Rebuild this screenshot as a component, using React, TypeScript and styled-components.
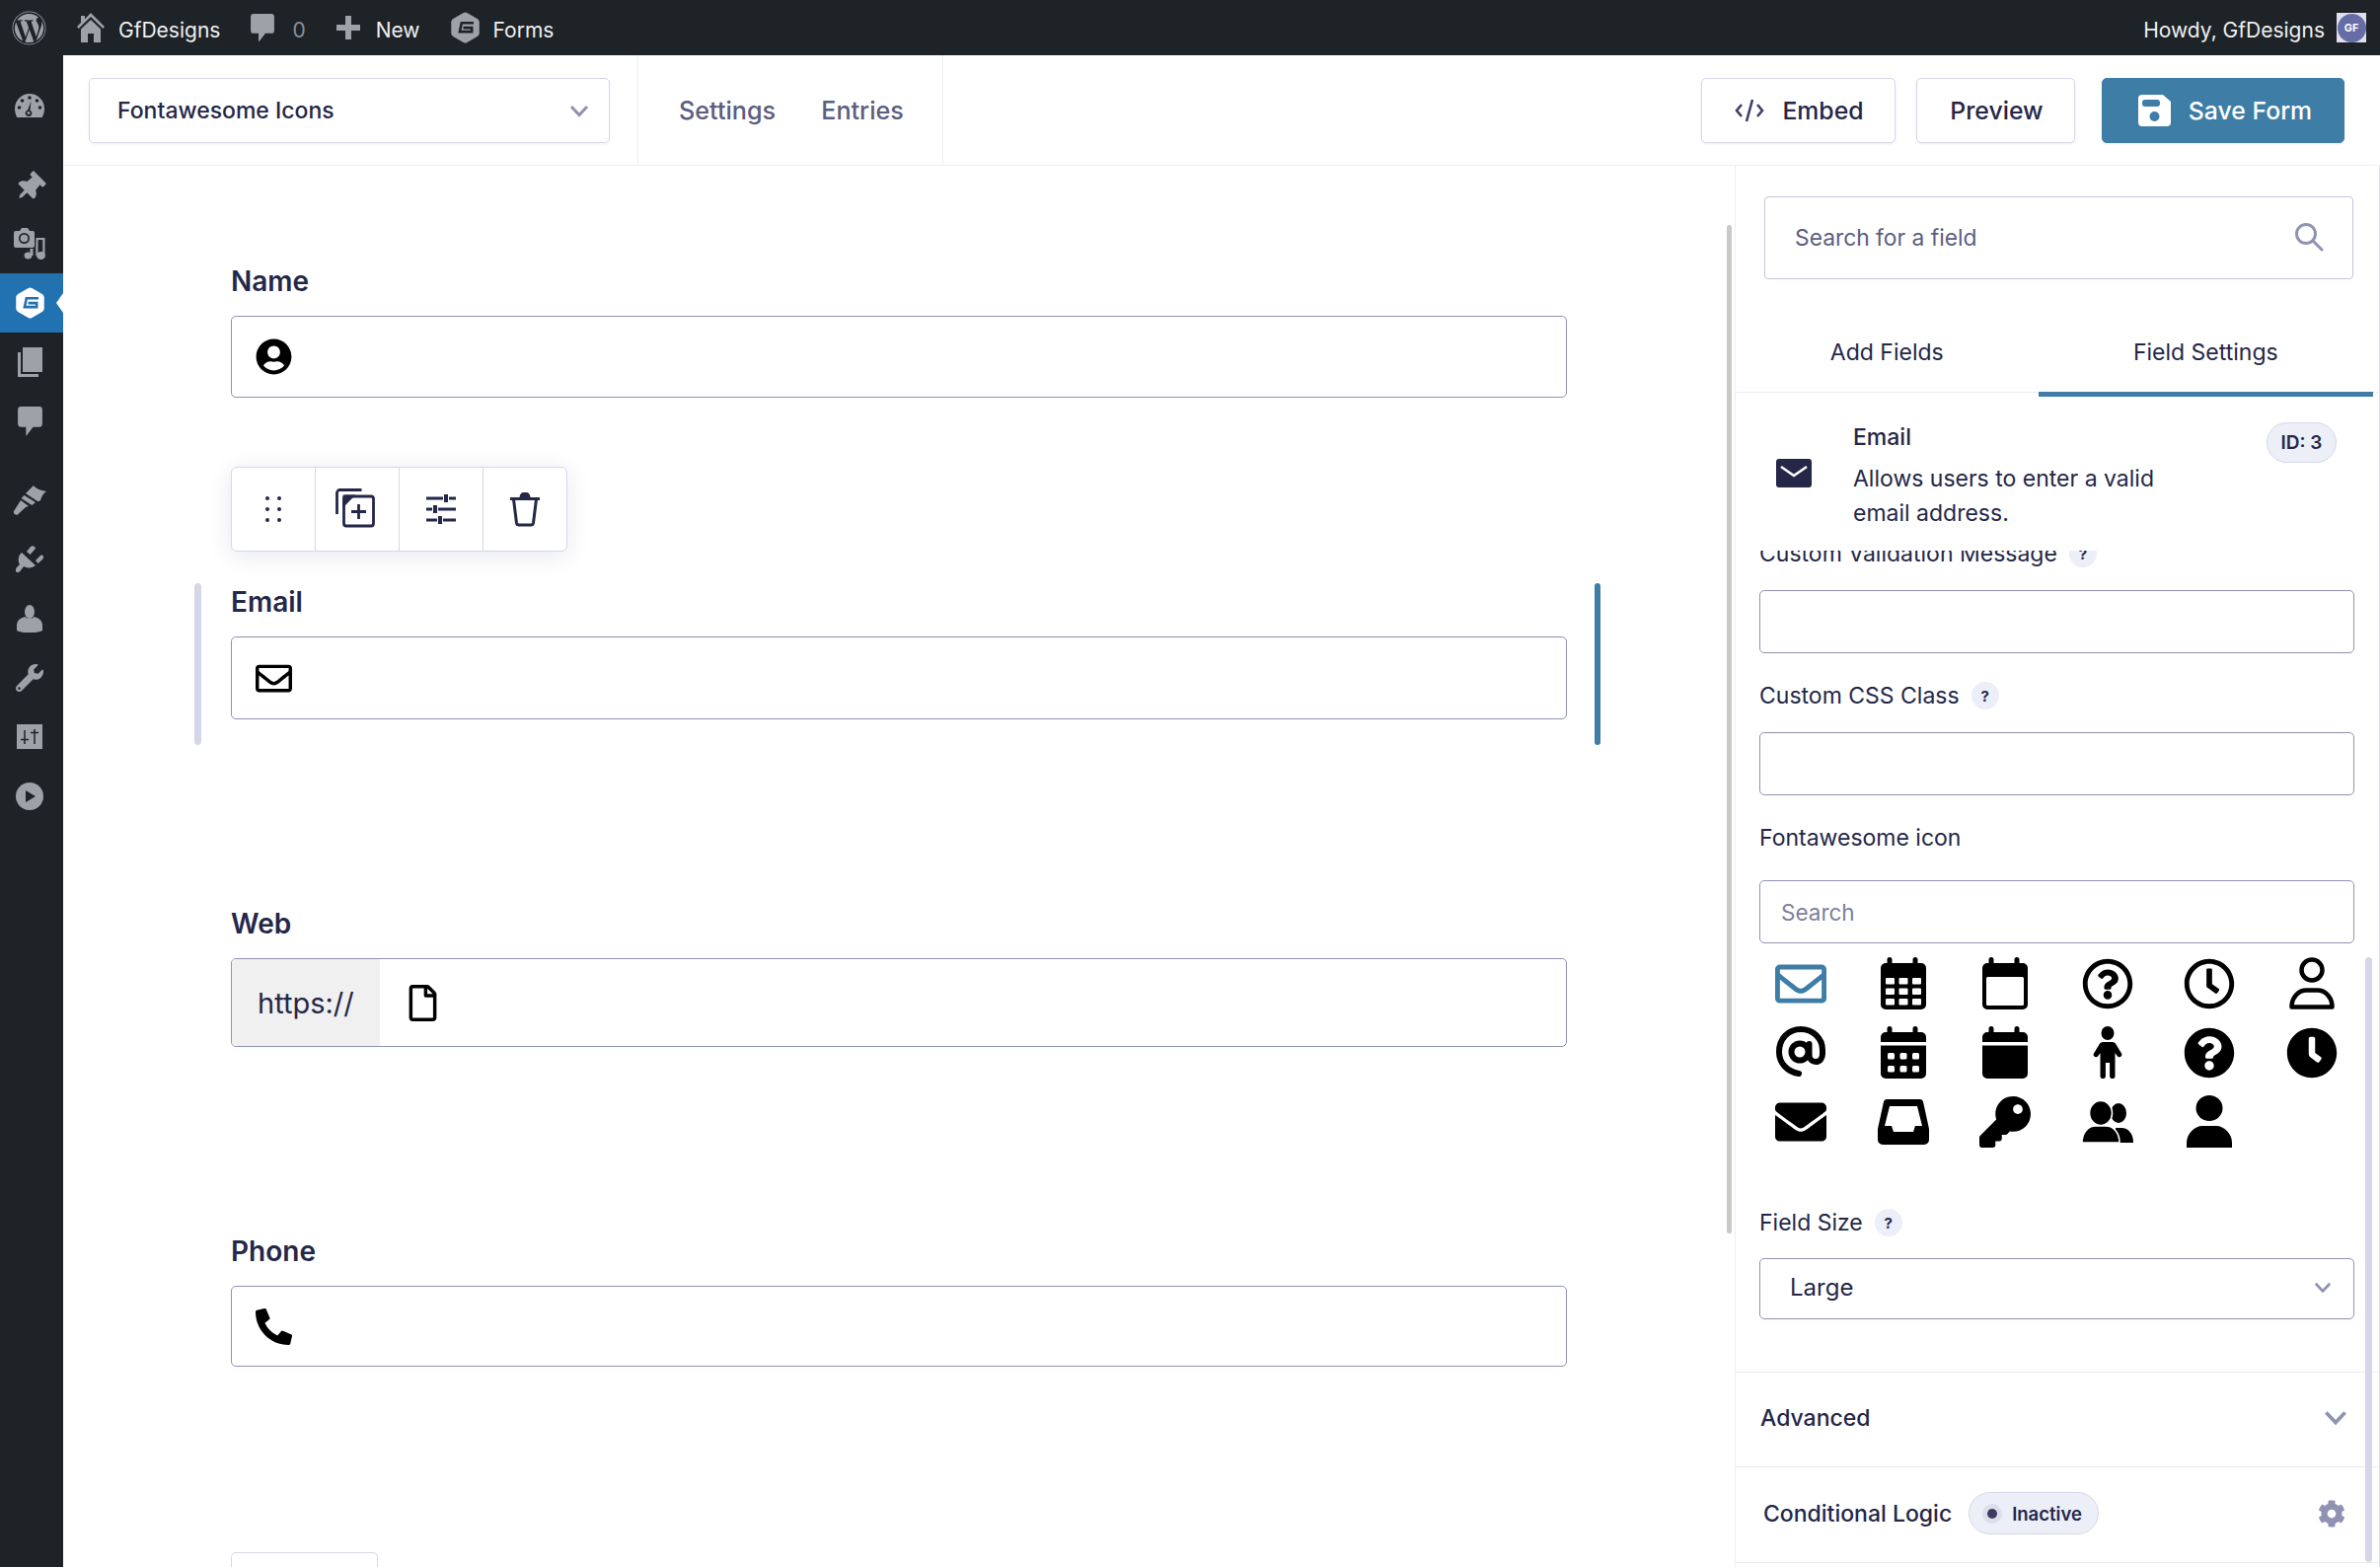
import React from "react";
import styled, { createGlobalStyle } from "styled-components";
import {
  FaCog,
  FaEnvelope,
  FaKey,
  FaPhoneAlt,
  FaQuestionCircle,
  FaClock,
  FaRegClock,
  FaRegEnvelope,
  FaRegFile,
  FaRegQuestionCircle,
  FaThumbtack,
  FaUserCircle,
  FaWordpress,
  FaWrench,
} from "react-icons/fa";

const ink = "#242748";
const muted = "#5b5e80";
const line = "#d5d7e9";
const inputLine = "#9092b2";
const blue = "#3e7da6";
const barIcon = "#9ca2a7";
const dark = "#1d2327";

const GlobalStyle = createGlobalStyle`
  html, body {
    margin: 0;
    padding: 0;
    background: #fff;
    overflow: hidden;
  }
  * {
    box-sizing: border-box;
  }
  body {
    font-family: Inter, "Liberation Sans", sans-serif;
    color: ${ink};
  }
`;

const Page = styled.div`
  width: 2412px;
  height: 1588px;
  display: flex;
  flex-direction: column;
  overflow: hidden;
`;

const TopBar = styled.header`
  height: 56px;
  flex: none;
  background: ${dark};
  color: #f0f0f1;
  display: flex;
  align-items: center;
  justify-content: space-between;
  padding: 0 14px 0 12px;
  font-size: 21px;
  line-height: 28px;
`;

const BarGroup = styled.div`
  display: flex;
  align-items: center;
  gap: 31px;
`;

const BarLink = styled.span<{ $gap?: number }>`
  display: flex;
  align-items: center;
  gap: ${({ $gap }) => $gap ?? 14}px;
  color: #f0f0f1;

  svg {
    color: ${barIcon};
    flex: none;
  }
`;

const BarText = styled.span`
  padding-top: 5px;
`;

const BarCount = styled(BarText)`
  color: #8c8f94;
`;

const Howdy = styled.div`
  display: flex;
  align-items: center;
  gap: 12px;
`;

const Avatar = styled.span`
  width: 30px;
  height: 30px;
  background: #dfe0ec;
  display: flex;
  align-items: center;
  justify-content: center;
`;

const AvatarMark = styled.span`
  width: 29px;
  height: 29px;
  border-radius: 50%;
  background: #666ca6;
  color: #fff;
  font-size: 11px;
  font-weight: 700;
  display: flex;
  align-items: center;
  justify-content: center;
`;

const Body = styled.div`
  flex: 1;
  display: flex;
  min-height: 0;
`;

const Sidebar = styled.nav`
  width: 64px;
  flex: none;
  background: ${dark};
  padding-top: 21px;
`;

const SideItem = styled.div<{ $active?: boolean; $gapTop?: boolean }>`
  position: relative;
  height: 60px;
  margin-top: ${({ $gapTop }) => ($gapTop ? 20 : 0)}px;
  padding-right: 4px;
  display: flex;
  align-items: center;
  justify-content: center;
  color: ${({ $active }) => ($active ? "#fff" : barIcon)};
  background: ${({ $active }) => ($active ? "#2271b1" : "transparent")};

  ${({ $active }) =>
    $active &&
    `&::after {
      content: "";
      position: absolute;
      right: 0;
      top: 50%;
      margin-top: -10px;
      border: 10px solid transparent;
      border-right-color: #fff;
      border-left-width: 0;
      border-right-width: 7px;
    }`}
`;

const PinIcon = styled(FaThumbtack)`
  transform: translateY(3px) rotate(45deg);
`;

const Main = styled.div`
  flex: 1;
  min-width: 0;
  display: flex;
  flex-direction: column;
`;

const Header = styled.div`
  height: 112px;
  flex: none;
  display: flex;
  align-items: stretch;
  border-bottom: 1px solid #eceef5;
`;

const FormPicker = styled.div`
  width: 583px;
  padding: 23px 28px 0 26px;
  border-right: 1px solid #eceef5;
`;

const FormSelect = styled.div`
  height: 66px;
  border: 1px solid ${line};
  border-radius: 5px;
  box-shadow: 0 1px 3px rgba(18, 25, 97, 0.06);
  display: flex;
  align-items: center;
  justify-content: space-between;
  padding: 0 20px 0 28px;
  font-size: 23px;
  font-weight: 500;
`;

const HeaderNav = styled.div`
  width: 309px;
  padding-left: 41px;
  border-right: 1px solid #eceef5;
  display: flex;
  align-items: center;
  gap: 46px;
  font-size: 25.2px;
  font-weight: 500;
  color: ${muted};
`;

const HeaderActions = styled.div`
  flex: 1;
  padding: 23px 36px 0 0;
  display: flex;
  justify-content: flex-end;
  gap: 21px;
`;

const HeaderButton = styled.div<{ $primary?: boolean; $width: number }>`
  width: ${({ $width }) => $width}px;
  height: 66px;
  display: flex;
  align-items: center;
  justify-content: center;
  gap: 18px;
  border-radius: 5px;
  font-size: 24.8px;
  font-weight: 500;
  padding-left: ${({ $primary }) => ($primary ? 4 : 2)}px;
  border: 1px solid ${({ $primary }) => ($primary ? blue : line)};
  background: ${({ $primary }) => ($primary ? blue : "#fff")};
  color: ${({ $primary }) => ($primary ? "#fff" : ink)};
  box-shadow: 0 1px 3px rgba(18, 25, 97, 0.08);
  margin-left: ${({ $primary }) => ($primary ? 6 : 0)}px;
`;

const Content = styled.div`
  flex: 1;
  min-height: 0;
  display: flex;
`;

const Canvas = styled.main`
  position: relative;
  flex: 1;
  min-width: 0;
  padding: 99px 0 0 170px;
  overflow: hidden;
  display: flex;
  flex-direction: column;
  gap: 189px;
`;

const CanvasScroll = styled.div`
  position: absolute;
  top: 60px;
  right: 3px;
  width: 5px;
  height: 1022px;
  background: #c9c9c5;
  border-radius: 3px;
`;

const Field = styled.section`
  position: relative;
  width: 1354px;
  flex: none;
`;

const FieldLabel = styled.div`
  height: 36px;
  margin-bottom: 17px;
  font-size: 28px;
  font-weight: 600;
  line-height: 36px;
`;

const FieldBox = styled.div<{ $height: number }>`
  height: ${({ $height }) => $height}px;
  border: 1px solid ${inputLine};
  border-radius: 5px;
  display: flex;
  align-items: center;
  padding-left: 24px;
  color: #000;
`;

const WebBox = styled(FieldBox)`
  padding-left: 0;
  overflow: hidden;
`;

const NextFieldStub = styled(FieldBox)`
  width: 149px;
  margin-top: -1px;
  border-color: ${line};
`;

const WebPrefix = styled.div`
  width: 151px;
  align-self: stretch;
  margin: -1px 0 -1px -1px;
  padding-left: 26px;
  background: #f0f0f0;
  border: 1px solid #c9c9cf;
  border-right: 0;
  display: flex;
  align-items: center;
  font-size: 29px;
  color: ${ink};
`;

const WebIcon = styled.span`
  display: flex;
  margin-left: 25px;
`;

const SelectBar = styled.div<{ $side: "left" | "right" }>`
  position: absolute;
  top: -1px;
  bottom: -26px;
  width: ${({ $side }) => ($side === "left" ? 7 : 6)}px;
  border-radius: 4px;
  background: ${({ $side }) => ($side === "left" ? line : blue)};
  ${({ $side }) => ($side === "left" ? "left: -37px;" : "right: -34px;")}
`;

const FieldTools = styled.div`
  position: absolute;
  left: 0;
  top: -119px;
  width: 341px;
  height: 86px;
  display: flex;
  background: #fff;
  border: 1px solid ${line};
  border-radius: 6px;
  box-shadow: 0 4px 24px rgba(18, 25, 97, 0.1);
`;

const ToolCell = styled.div`
  flex: 1;
  display: flex;
  align-items: center;
  justify-content: center;
  & + & {
    border-left: 1px solid ${line};
  }
`;

const DuplicateGlyph = styled.svg`
  margin: -2px 4px 0 0;
`;

const Panel = styled.aside`
  position: relative;
  width: 654px;
  flex: none;
  border-left: 1px solid #eceef5;
  border-right: 1px solid #dcdde6;
  display: flex;
  flex-direction: column;
  overflow: hidden;
`;

const PanelScroll = styled.div`
  position: absolute;
  z-index: 2;
  top: 802px;
  bottom: 5px;
  right: 7px;
  width: 7px;
  border-radius: 4px;
  background: ${line};
`;

const SearchBox = styled.div`
  flex: none;
  height: 84px;
  margin: 31px 26px 0 29px;
  border: 1px solid #c4c5dc;
  border-radius: 4px;
  display: flex;
  align-items: center;
  justify-content: space-between;
  padding: 0 29px 2px 30px;
  font-size: 22.8px;
  color: ${muted};
`;

const Tabs = styled.div`
  flex: none;
  margin-top: 34px;
  height: 81px;
  display: flex;
  padding-right: 6px;
  border-bottom: 1px solid #e9e9ee;
`;

const Tab = styled.div<{ $active?: boolean; $width: number }>`
  position: relative;
  width: ${({ $width }) => $width}px;
  display: flex;
  align-items: center;
  justify-content: center;
  font-size: 23px;
  font-weight: 400;

  ${({ $active }) =>
    $active &&
    `&::after {
      content: "";
      position: absolute;
      left: 0;
      right: 0;
      bottom: -5px;
      height: 5px;
      background: ${blue};
    }`}
`;

const Summary = styled.div`
  flex: none;
  height: 155px;
  margin-top: 5px;
  padding: 23px 43px 0 41px;
  display: flex;
  align-items: flex-start;
  position: relative;
  z-index: 1;
  background: #fff;
`;

const SummaryIcon = styled.span`
  display: flex;
  margin: 39px 42px 0 0;
`;

const SummaryText = styled.div`
  flex: 1;
  font-size: 23px;
  line-height: 35px;
`;

const SummaryTitle = styled.div`
  margin-bottom: 7px;
  font-weight: 500;
`;

const SummaryDescription = styled.div`
  width: 340px;
`;

const IdPill = styled.div`
  width: 71px;
  height: 41px;
  margin-top: 2px;
  border-radius: 21px;
  border: 1px solid ${line};
  background: #eceef8;
  display: flex;
  align-items: center;
  justify-content: center;
  font-size: 19px;
  font-weight: 600;
`;

const Settings = styled.div`
  flex: 1;
  min-height: 0;
  overflow: hidden;
`;

const SettingsForm = styled.div`
  margin-top: -13px;
  padding: 0 25px 0 24px;
`;

const SettingLabel = styled.div<{ $after?: number; $before?: number }>`
  height: 32px;
  margin-top: ${({ $before }) => $before ?? 0}px;
  margin-bottom: ${({ $after }) => $after ?? 18}px;
  display: flex;
  align-items: center;
  gap: 12px;
  font-size: 23px;
`;

const HelpBadge = styled.span`
  width: 28px;
  height: 28px;
  border-radius: 50%;
  background: #eceef8;
  display: flex;
  align-items: center;
  justify-content: center;
  font-size: 15px;
  font-weight: 700;
`;

const SettingInput = styled.div<{ $height?: number; $placeholder?: boolean }>`
  width: 603px;
  height: ${({ $height }) => $height ?? 64}px;
  border: 1px solid ${inputLine};
  border-radius: 5px;
  display: flex;
  align-items: center;
  padding: 0 21px;
  font-size: 22.5px;
  color: ${({ $placeholder }) => ($placeholder ? "#7d7f9c" : ink)};
`;

const SelectValue = styled(SettingInput)`
  justify-content: space-between;
  padding: 0 22px 3px 30px;
  font-size: 24px;
`;

const IconGrid = styled.div`
  margin-top: 14px;
  padding-left: 16px;
  display: grid;
  grid-template-columns: repeat(6, 52px);
  grid-auto-rows: 53px;
  column-gap: 51.6px;
  row-gap: 17px;
`;

const IconCell = styled.span<{ $active?: boolean }>`
  display: flex;
  align-items: center;
  justify-content: center;
  color: ${({ $active }) => ($active ? blue : "#000")};
`;

const Drawer = styled.div<{ $height: number }>`
  height: ${({ $height }) => $height}px;
  border-top: 1px solid #e9e9ee;
  display: flex;
  align-items: center;
  justify-content: space-between;
  font-size: 23px;
  font-weight: 500;
`;

const Drawers = styled.div`
  margin-top: 53px;
`;

const AdvancedRow = styled(Drawer)`
  padding: 0 32px 3px 25px;
`;

const LogicRow = styled(Drawer)`
  padding: 0 34px 3px 28px;
  border-bottom: 1px solid #e9e9ee;
`;

const LogicLeft = styled.div`
  display: flex;
  align-items: center;
  gap: 17px;
`;

const StatePill = styled.div`
  width: 132px;
  height: 43px;
  border-radius: 22px;
  border: 1px solid ${line};
  background: #eceef8;
  display: flex;
  align-items: center;
  padding-left: 13px;
  gap: 10px;
  font-size: 18.5px;
  font-weight: 600;
`;

const StateDot = styled.span`
  width: 20px;
  height: 20px;
  border-radius: 50%;
  background: #dcdeea;
  position: relative;

  &::after {
    content: "";
    position: absolute;
    inset: 5px;
    border-radius: 50%;
    background: #3b3e60;
  }
`;

const GfLogo = ({ size, body, mark }: { size: number; body: string; mark: string }) => (
  <svg width={size} height={size * 1.1} viewBox="0 0 29 32">
    <path
      fill={body}
      d="M12.6 1 Q14.5 0 16.4 1 L26.8 7 Q28.8 8.2 28.8 10.4 V21.6 Q28.8 23.8 26.8 25 L16.4 31 Q14.5 32 12.6 31 L2.2 25 Q.2 23.8 .2 21.6 V10.4 Q.2 8.2 2.2 7 Z"
    />
    <path fill="none" stroke={mark} strokeWidth="2.6" d="M23 11.3H10.8L8.9 20.2H21.2V16.2H12.5" />
  </svg>
);

const HomeIcon = () => (
  <svg width="28" height="30" viewBox="0 0 28 30" fill="currentColor">
    <path d="M14 0L28 14l-1.6 2L14 4 1.600 16 0 14 4 10V3h4v3.300z" />
    <path d="M14 7l10 9.500V30h-7v-9h-6v9H4V16.500z" />
  </svg>
);

const BubbleIcon = ({ size = 24 }: { size?: number }) => (
  <svg width={size} height={size * 1.2} viewBox="0 0 24 29" fill="currentColor">
    <path d="M3 0h18a3 3 0 0 1 3 3v14a3 3 0 0 1-3 3h-6l-7 9v-9H3a3 3 0 0 1-3-3V3a3 3 0 0 1 3-3z" />
  </svg>
);

const PlusIcon = () => (
  <svg width="24" height="24" viewBox="0 0 24 24" fill="currentColor">
    <path d="M9 0h6v9h9v6h-9v9H9v-9H0V9h9z" />
  </svg>
);

const DashboardIcon = () => (
  <svg width="30" height="24" viewBox="0 0 30 24">
    <path fill="currentColor" d="M15 0A15 15 0 0 0 0 15c0 3.300.8 6.200 2.300 9h25.400A17 17 0 0 0 30 15 15 15 0 0 0 15 0z" />
    <g fill={dark}>
      <circle cx="15" cy="4" r="1.800" />
      <circle cx="7.500" cy="7" r="1.800" />
      <circle cx="22.500" cy="7" r="1.800" />
      <circle cx="4.500" cy="14" r="1.800" />
      <circle cx="25.500" cy="14" r="1.800" />
      <path d="M16.500 7.500l-1 9.300a3.300 3.300 0 1 1-2.400-.2z" />
    </g>
    <circle cx="14" cy="19.500" r="1.400" fill="currentColor" />
  </svg>
);

const MediaIcon = () => (
  <svg width="32" height="32" viewBox="0 0 32 32" fill="currentColor">
    <path d="M2 3h4l2-3h6l2 3h3a2 2 0 0 1 2 2v13a2 2 0 0 1-2 2H2a2 2 0 0 1-2-2V5a2 2 0 0 1 2-2z" />
    <circle cx="10.500" cy="10.500" r="5.500" fill={dark} />
    <circle cx="10.500" cy="10.500" r="3.800" />
    <path d="M22 9.500h10v19h-3.200V12.500H25v16h-3.200V20z" stroke={dark} strokeWidth="1" />
    <ellipse cx="14.500" cy="28" rx="4.500" ry="4" stroke={dark} strokeWidth="1" />
    <ellipse cx="27.500" cy="28" rx="4.500" ry="4" />
    <rect x="16.500" y="21" width="3" height="7" />
  </svg>
);

const PagesIcon = () => (
  <svg width="25" height="30" viewBox="0 0 25 30" fill="currentColor">
    <path d="M5 0h20v25H5z" />
    <path d="M0 5h3v22h18v3H0z" />
  </svg>
);

const BrushIcon = () => (
  <svg width="34" height="30" viewBox="0 0 34 30" fill="currentColor">
    <path d="M13 8L21 0c2 3 7 5 13 6-3 2-5 5-6 9-1 1-2 1-3 1z" />
    <path d="M11.500 10l11.500 7-3.500 3-11-7zM8 15l8 6-3 1-8 7.500c-2 1-5-1-4-3.500z" />
  </svg>
);

const PlugIcon = () => (
  <svg width="28" height="28" viewBox="0 0 28 28" fill="currentColor">
    <path d="M6 7l14 13c-3 3-9 3-12 1l-3 4c-1 2-4 3-5 1-1-1 0-3 1-4l3-3C2 16 2 10 6 7z" />
    <path d="M11 6l4-5c1-1 3-1 4 0s1 2 0 3l-4.500 5zM20 15l5-5c1-1 3 0 3 1s0 2-1 3l-4.500 4z" />
  </svg>
);

const UserIcon = () => (
  <svg width="26" height="28" viewBox="0 0 26 28" fill="currentColor">
    <ellipse cx="13" cy="7" rx="5" ry="7" />
    <path d="M8.500 12c1 2.500 8 2.500 9 0 4 1 8.500 3 8.500 9v5c-6 3-20 3-26 0v-5c0-6 4.500-8 8.500-9z" />
  </svg>
);

const SettingsIcon = () => (
  <svg width="26" height="26" viewBox="0 0 26 26">
    <path fill="currentColor" d="M0 0h26v25H0z" />
    <g stroke={dark} strokeWidth="1.500" fill="none">
      <path d="M8 6v14M4 15.500h8M18 5v15M14 8.500h8" />
    </g>
  </svg>
);

const PlayIcon = () => (
  <svg width="28" height="28" viewBox="0 0 28 28">
    <circle cx="14" cy="14" r="14" fill="currentColor" />
    <path d="M10 8l10 6-10 6z" fill={dark} />
  </svg>
);

const Chevron = ({ size = 20, color = inputLine }: { size?: number; color?: string }) => (
  <svg width={size} height={size * 0.65} viewBox="0 0 20 13" fill="none" stroke={color} strokeWidth="3">
    <path d="M2 2l8 8.500L18 2" />
  </svg>
);

const CodeIcon = () => (
  <svg width="30" height="24" viewBox="0 0 30 24" fill="none" stroke="#3e4168" strokeWidth="2.600">
    <path d="M7 6L2 12l5 6M23 6l5 6-5 6M18 1l-6 22" />
  </svg>
);

const SaveIcon = () => (
  <svg width="33" height="32" viewBox="0 0 33 32">
    <path fill="#fff" d="M4 0h21l8 7v21a4 4 0 0 1-4 4H4a4 4 0 0 1-4-4V4a4 4 0 0 1 4-4z" />
    <rect x="4" y="5" width="18" height="7" rx="3" fill={blue} />
    <circle cx="16.500" cy="22" r="5" fill={blue} />
  </svg>
);

const SearchIcon = () => (
  <svg width="30" height="30" viewBox="0 0 30 30" fill="none" stroke={inputLine} strokeWidth="3">
    <circle cx="12" cy="12" r="9.500" />
    <path d="M19 19l9 9" strokeLinecap="round" />
  </svg>
);

const DotsIcon = () => (
  <svg width="18" height="28" viewBox="0 0 18 28" fill={ink}>
    <circle cx="3" cy="3" r="2" />
    <circle cx="15" cy="3" r="2" />
    <circle cx="3" cy="14" r="2" />
    <circle cx="15" cy="14" r="2" />
    <circle cx="3" cy="25" r="2" />
    <circle cx="15" cy="25" r="2" />
  </svg>
);

const DuplicateIcon = () => (
  <DuplicateGlyph width="40" height="40" viewBox="0 0 40 40" fill="none" stroke={ink} strokeWidth="2.800">
    <path d="M1.500 26V4.500a3 3 0 0 1 3-3h22" />
    <rect x="8.500" y="8" width="30" height="30" rx="2.500" />
    <path d="M9 8h8l-8 8z" fill={ink} />
    <path d="M23.500 16v15M16 23.500h15" />
  </DuplicateGlyph>
);

const SlidersIcon = () => (
  <svg width="32" height="32" viewBox="0 0 32 32" fill="none" stroke={ink} strokeWidth="2.800">
    <path d="M1 5h17M24 5h7M1 16h6M13 16h18M1 27h11M18 27h13" />
    <path d="M21 1v8M10 12v8M15 23v8" strokeWidth="4" />
  </svg>
);

const TrashIcon = () => (
  <svg width="32" height="35" viewBox="0 0 32 35" fill="none" stroke={ink} strokeWidth="3">
    <path d="M1 6.500h30M4.500 7l3 24a2.500 2.500 0 0 0 2.500 2h12a2.500 2.500 0 0 0 2.500-2l3-24" />
    <path d="M12 5a4 4 0 0 1 8 0z" fill={ink} />
  </svg>
);

const MailTile = () => (
  <svg width="36" height="29" viewBox="0 0 36 29">
    <rect width="36" height="29" rx="3" fill={ink} />
    <path d="M5 8l13 9 13-9" fill="none" stroke="#fff" strokeWidth="2.600" />
  </svg>
);

const calendarShell =
  "M9 0a2.500 2.500 0 0 1 2.500 2.500V6h21V2.500a2.500 2.500 0 0 1 5 0V6H41a5 5 0 0 1 5 5v37a5 5 0 0 1-5 5H5a5 5 0 0 1-5-5V11a5 5 0 0 1 5-5h1.500V2.500A2.500 2.500 0 0 1 9 0z";

const CalendarGrid = () => (
  <svg width="46" height="53" viewBox="0 0 46 53">
    <path fill="#000" d={calendarShell} />
    <g fill="#fff">
      {[21, 31.500, 42].map((y) =>
        [5, 18.500, 32].map((x) => <rect key={`${x}-${y}`} x={x} y={y} width="9" height="6.500" rx="1" />)
      )}
    </g>
  </svg>
);

const CalendarOutline = () => (
  <svg width="46" height="53" viewBox="0 0 46 53">
    <path fill="#000" d={calendarShell} />
    <rect x="4" y="20" width="38" height="29" rx="1.500" fill="#fff" />
  </svg>
);

const CalendarDots = () => (
  <svg width="46" height="53" viewBox="0 0 46 53">
    <path fill="#000" d={calendarShell} />
    <rect y="16" width="46" height="3.500" fill="#fff" />
    <g fill="#fff">
      {[27, 40].map((y) =>
        [7, 19.500, 32].map((x) => <rect key={`${x}-${y}`} x={x} y={y} width="7" height="6.500" rx="1.500" />)
      )}
    </g>
  </svg>
);

const CalendarSolid = () => (
  <svg width="46" height="53" viewBox="0 0 46 53">
    <path fill="#000" d={calendarShell} />
    <rect y="16" width="46" height="3.500" fill="#fff" />
  </svg>
);

const AtIcon = () => (
  <svg width="50" height="53" viewBox="0 0 50 53" fill="none" stroke="#000" strokeWidth="6" strokeLinecap="round">
    <path d="M23 48C11 46 3 37 3 26 3 13 12 3 25 3c12 0 22 9 22 21v4c0 5-3 8-7 8-3.500 0-6.500-3-6.500-7V18" />
    <ellipse cx="24" cy="26" rx="8.500" ry="8.500" />
  </svg>
);

const ChildIcon = () => (
  <svg width="34" height="53" viewBox="0 0 34 53">
    <ellipse cx="17" cy="7" rx="6.500" ry="7" fill="#000" />
    <path d="M12 16h10a4 4 0 0 1 3 1.500l6 10a2.500 2.500 0 0 1-4.200 2.700L24.500 27v23.500a2.700 2.700 0 0 1-5.400 0V37h-4.200v13.500a2.700 2.700 0 0 1-5.400 0V27l-2.300 3.200A2.500 2.500 0 0 1 3 27.500l6-10A4 4 0 0 1 12 16z" fill="#000" />
  </svg>
);

const InboxIcon = () => (
  <svg width="52" height="46" viewBox="0 0 52 46">
    <path
      fill="#000"
      fillRule="evenodd"
      d="M9 0h34a3 3 0 0 1 3 2.500L52 30v11a5 5 0 0 1-5 5H5a5 5 0 0 1-5-5V30L6 2.500A3 3 0 0 1 9 0zM12 7L7 27h7l2 6h20l2-6h7L40 7z"
    />
  </svg>
);

const FriendsIcon = () => (
  <svg width="52" height="42" viewBox="0 0 52 42">
    <ellipse cx="37" cy="12" rx="8" ry="10" fill="#000" />
    <path d="M34 27h6c7 0 12 6 12 15H34z" fill="#000" />
    <ellipse cx="19" cy="12" rx="11.500" ry="12.500" fill="#000" stroke="#fff" strokeWidth="1.600" />
    <path d="M0 42c0-10 6-17 14-17h10c8 0 14 7 14 17z" fill="#000" stroke="#fff" strokeWidth="1.600" />
  </svg>
);

const UserOutline = () => (
  <svg width="46" height="53" viewBox="0 0 46 53" fill="none" stroke="#000" strokeWidth="4.500">
    <ellipse cx="23" cy="13" rx="10.500" ry="10.500" />
    <path d="M2.500 50.500c0-10 7-17 15-17h11c8 0 15 7 15 17z" strokeLinejoin="round" />
  </svg>
);

const UserSolid = () => (
  <svg width="46" height="53" viewBox="0 0 46 53" fill="#000">
    <ellipse cx="23" cy="13" rx="13.500" ry="13" />
    <path d="M0 53v-5c0-9 8-17 16-17h14c8 0 16 8 16 17v5z" />
  </svg>
);

const fa = (Icon: React.ComponentType<{ size?: number }>) => () => <Icon size={52} />;

const pickerIcons = [
  fa(FaRegEnvelope),
  CalendarGrid,
  CalendarOutline,
  fa(FaRegQuestionCircle),
  fa(FaRegClock),
  UserOutline,
  AtIcon,
  CalendarDots,
  CalendarSolid,
  ChildIcon,
  fa(FaQuestionCircle),
  fa(FaClock),
  fa(FaEnvelope),
  InboxIcon,
  fa(FaKey),
  FriendsIcon,
  UserSolid,
];

const App = () => (
  <Page>
    <GlobalStyle />
    <TopBar>
      <BarGroup>
        <BarLink>
          <FaWordpress size={35} />
        </BarLink>
        <BarLink>
          <HomeIcon />
          <BarText>GfDesigns</BarText>
        </BarLink>
        <BarLink $gap={18}>
          <BubbleIcon />
          <BarCount>0</BarCount>
        </BarLink>
        <BarLink $gap={16}>
          <PlusIcon />
          <BarText>New</BarText>
        </BarLink>
        <BarLink>
          <GfLogo size={29} body={barIcon} mark={dark} />
          <BarText>Forms</BarText>
        </BarLink>
      </BarGroup>
      <Howdy>
        <BarText>Howdy, GfDesigns</BarText>
        <Avatar>
          <AvatarMark>GF</AvatarMark>
        </Avatar>
      </Howdy>
    </TopBar>
    <Body>
      <Sidebar>
        <SideItem>
          <DashboardIcon />
        </SideItem>
        <SideItem $gapTop>
          <PinIcon size={30} />
        </SideItem>
        <SideItem>
          <MediaIcon />
        </SideItem>
        <SideItem $active>
          <GfLogo size={29} body="#fff" mark="#2271b1" />
        </SideItem>
        <SideItem>
          <PagesIcon />
        </SideItem>
        <SideItem>
          <BubbleIcon size={25} />
        </SideItem>
        <SideItem $gapTop>
          <BrushIcon />
        </SideItem>
        <SideItem>
          <PlugIcon />
        </SideItem>
        <SideItem>
          <UserIcon />
        </SideItem>
        <SideItem>
          <FaWrench size={28} />
        </SideItem>
        <SideItem>
          <SettingsIcon />
        </SideItem>
        <SideItem>
          <PlayIcon />
        </SideItem>
      </Sidebar>
      <Main>
        <Header>
          <FormPicker>
            <FormSelect>
              Fontawesome Icons
              <Chevron />
            </FormSelect>
          </FormPicker>
          <HeaderNav>
            <span>Settings</span>
            <span>Entries</span>
          </HeaderNav>
          <HeaderActions>
            <HeaderButton $width={197}>
              <CodeIcon />
              Embed
            </HeaderButton>
            <HeaderButton $width={161}>Preview</HeaderButton>
            <HeaderButton $primary $width={246}>
              <SaveIcon />
              Save Form
            </HeaderButton>
          </HeaderActions>
        </Header>
        <Content>
          <Canvas>
            <Field>
              <FieldLabel>Name</FieldLabel>
              <FieldBox $height={83}>
                <FaUserCircle size={37} />
              </FieldBox>
            </Field>
            <Field>
              <FieldTools>
                <ToolCell>
                  <DotsIcon />
                </ToolCell>
                <ToolCell>
                  <DuplicateIcon />
                </ToolCell>
                <ToolCell>
                  <SlidersIcon />
                </ToolCell>
                <ToolCell>
                  <TrashIcon />
                </ToolCell>
              </FieldTools>
              <SelectBar $side="left" />
              <SelectBar $side="right" />
              <FieldLabel>Email</FieldLabel>
              <FieldBox $height={84}>
                <FaRegEnvelope size={37} />
              </FieldBox>
            </Field>
            <Field>
              <FieldLabel>Web</FieldLabel>
              <WebBox $height={90}>
                <WebPrefix>https://</WebPrefix>
                <WebIcon>
                  <FaRegFile size={37} />
                </WebIcon>
              </WebBox>
            </Field>
            <Field>
              <FieldLabel>Phone</FieldLabel>
              <FieldBox $height={82}>
                <FaPhoneAlt size={37} />
              </FieldBox>
            </Field>
            <Field>
              <NextFieldStub $height={90} />
            </Field>
            <CanvasScroll />
          </Canvas>
          <Panel>
            <SearchBox>
              Search for a field
              <SearchIcon />
            </SearchBox>
            <Tabs>
              <Tab $width={307}>Add Fields</Tab>
              <Tab $active $width={340}>
                Field Settings
              </Tab>
            </Tabs>
            <Summary>
              <SummaryIcon>
                <MailTile />
              </SummaryIcon>
              <SummaryText>
                <SummaryTitle>Email</SummaryTitle>
                <SummaryDescription>Allows users to enter a valid email address.</SummaryDescription>
              </SummaryText>
              <IdPill>ID: 3</IdPill>
            </Summary>
            <Settings>
              <SettingsForm>
                <SettingLabel $after={21}>
                  Custom Validation Message
                  <HelpBadge>?</HelpBadge>
                </SettingLabel>
                <SettingInput />
                <SettingLabel $before={27} $after={21}>
                  Custom CSS Class
                  <HelpBadge>?</HelpBadge>
                </SettingLabel>
                <SettingInput />
                <SettingLabel $before={27} $after={27}>
                  Fontawesome icon
                </SettingLabel>
                <SettingInput $placeholder>Search</SettingInput>
                <IconGrid>
                  {pickerIcons.map((Icon, i) => (
                    <IconCell key={i} $active={i === 0}>
                      <Icon />
                    </IconCell>
                  ))}
                </IconGrid>
                <SettingLabel $before={60} $after={20}>
                  Field Size
                  <HelpBadge>?</HelpBadge>
                </SettingLabel>
                <SelectValue $height={62}>
                  Large
                  <Chevron size={18} />
                </SelectValue>
              </SettingsForm>
              <Drawers>
                <AdvancedRow $height={96}>
                  Advanced
                  <Chevron size={24} />
                </AdvancedRow>
                <LogicRow $height={98}>
                  <LogicLeft>
                    Conditional Logic
                    <StatePill>
                      <StateDot />
                      Inactive
                    </StatePill>
                  </LogicLeft>
                  <FaCog size={28} color={inputLine} />
                </LogicRow>
              </Drawers>
            </Settings>
            <PanelScroll />
          </Panel>
        </Content>
      </Main>
    </Body>
  </Page>
);

export default App;
